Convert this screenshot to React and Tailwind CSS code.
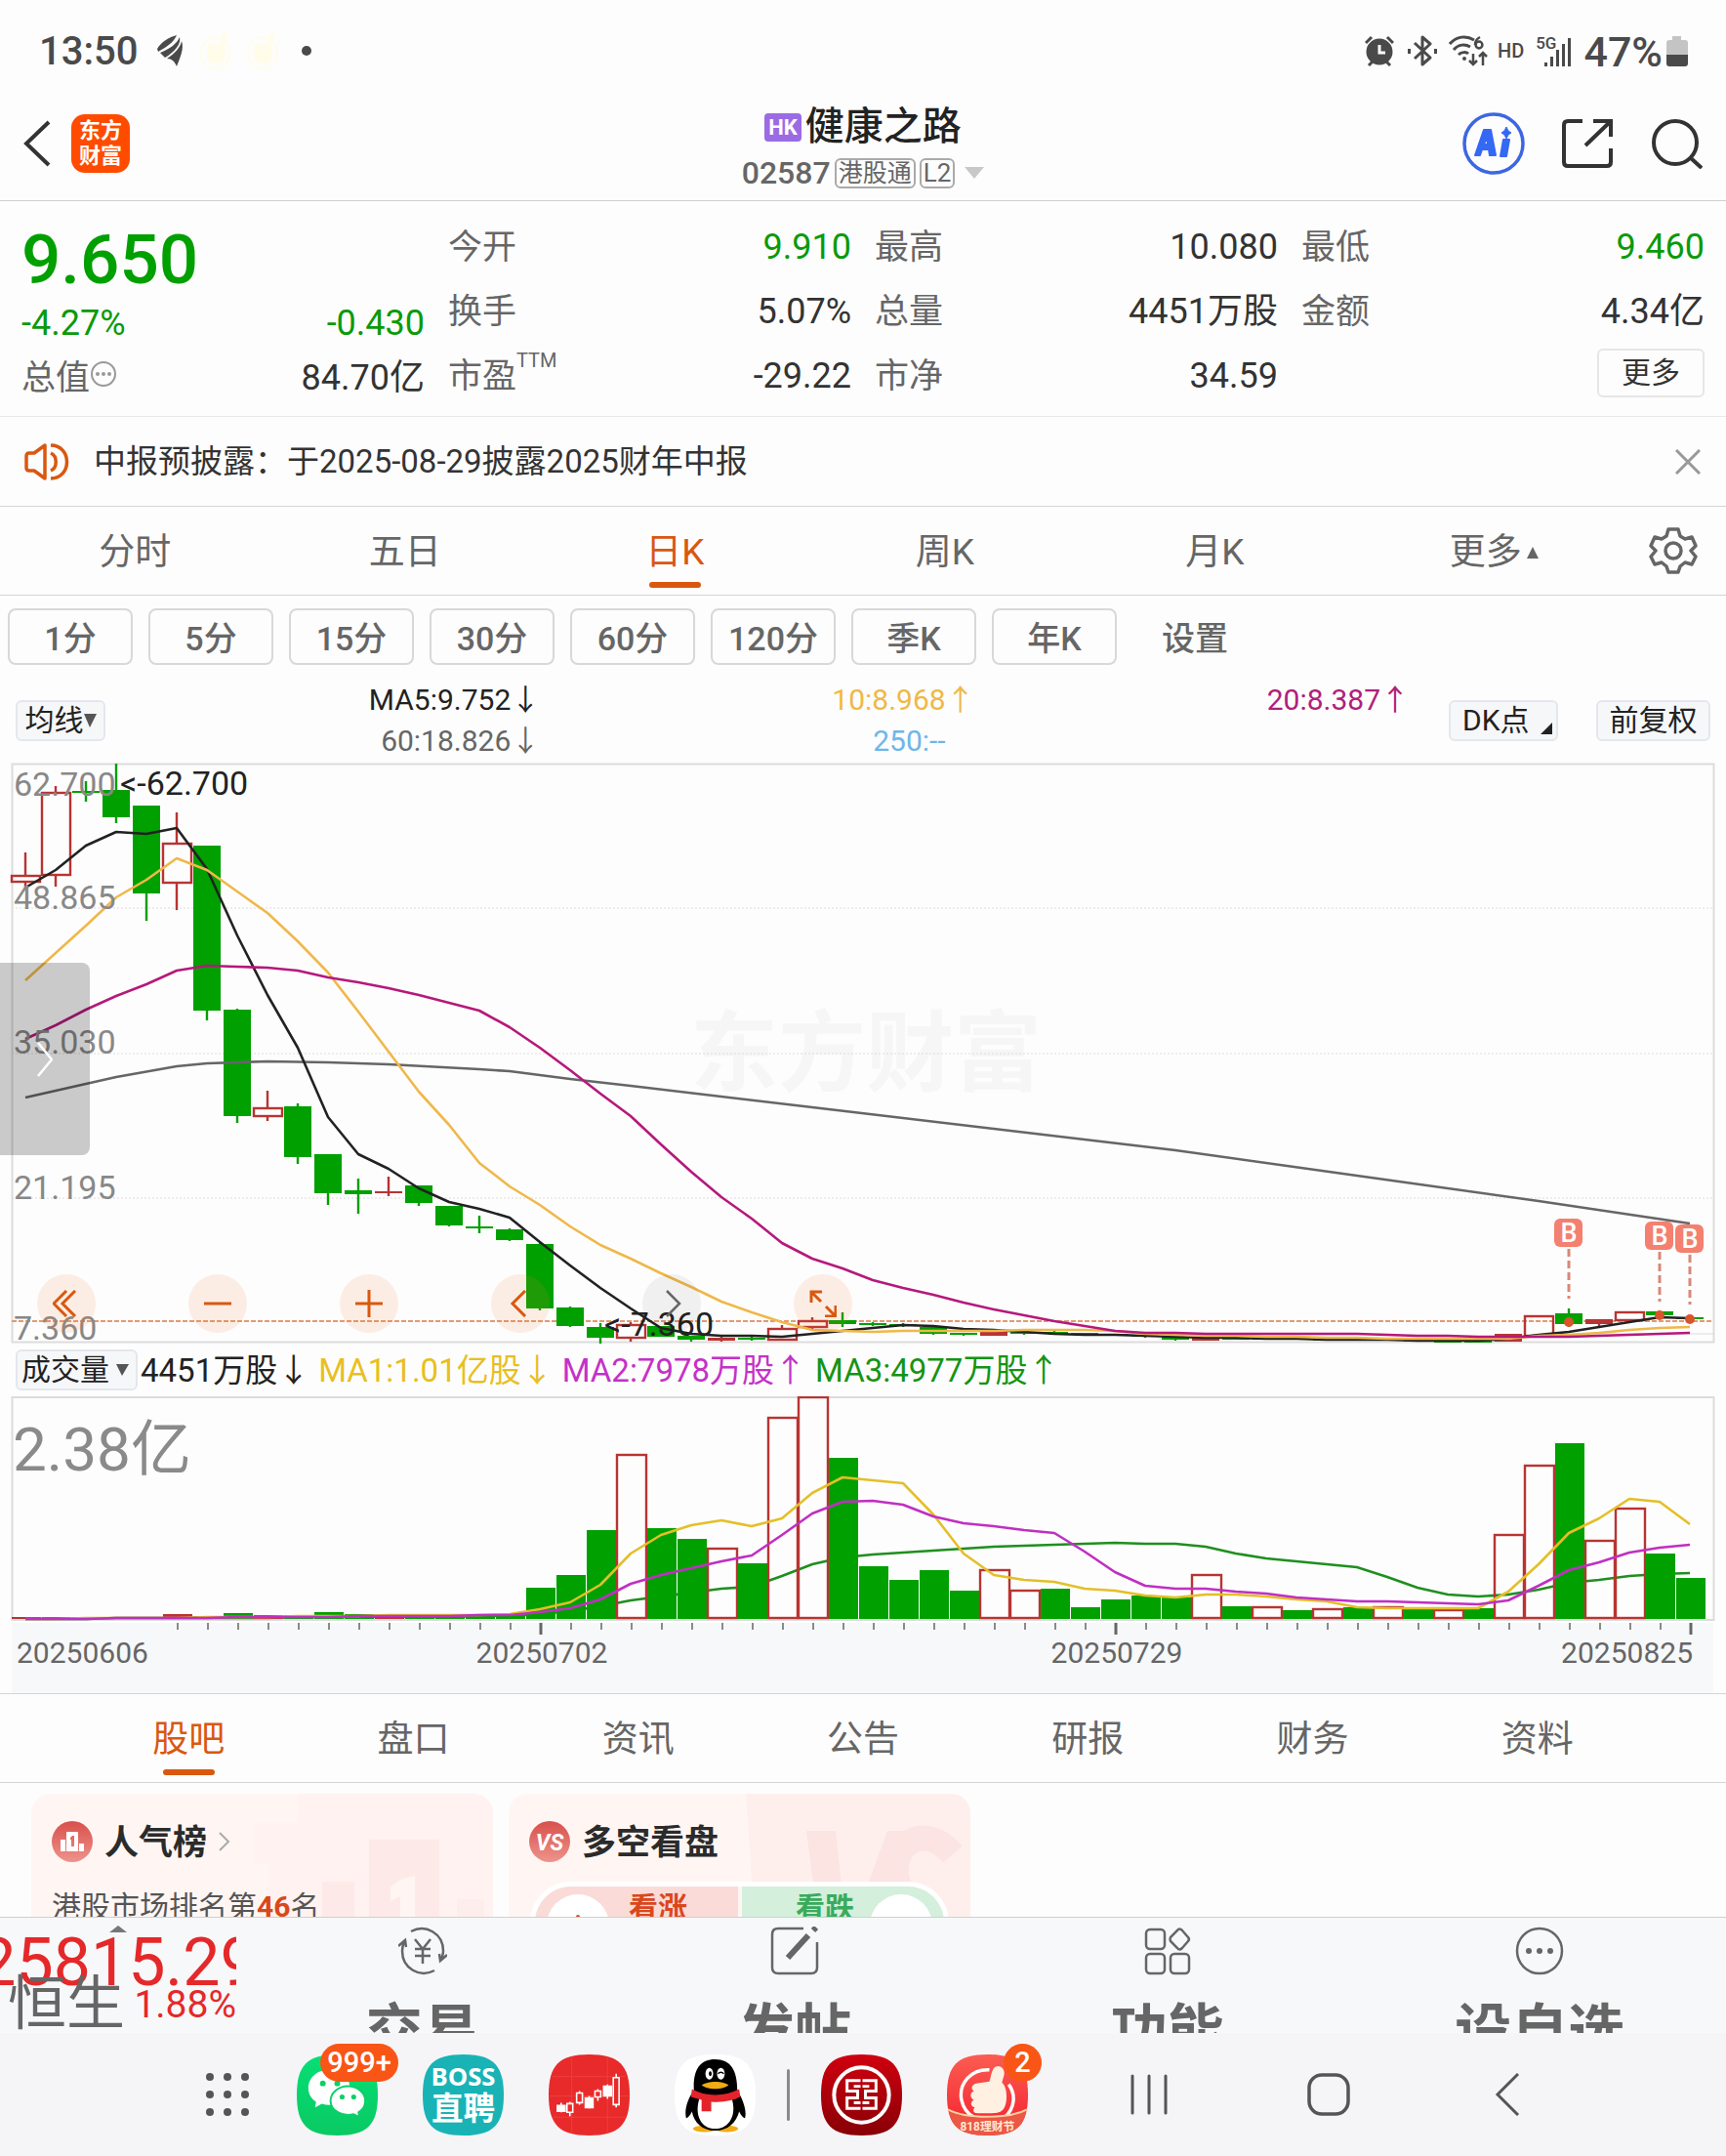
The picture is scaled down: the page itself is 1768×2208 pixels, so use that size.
import React from "react";

const GREEN = "#00a000";
const RED = "#b83432";
const X0 = 26;
const STEP = 31;
const cx = (i) => X0 + STEP * i;

/* [kind, bodyTop, bodyBottom, wickTop, wickBottom] */
const candles = [
  ["r", 897, 903, 873, 909], ["r", 812, 896, 805, 908], ["g", 810, 812, 800, 821],
  ["g", 809, 837, 782, 843], ["g", 825, 915, 825, 943], ["r", 864, 904, 832, 932],
  ["g", 866, 1035, 866, 1045], ["g", 1034, 1143, 1033, 1150], ["r", 1135, 1143, 1117, 1148],
  ["g", 1133, 1185, 1130, 1192], ["g", 1182, 1222, 1182, 1234], ["g", 1219, 1223, 1207, 1243],
  ["f", 1220, 1222, 1205, 1225], ["g", 1214, 1232, 1214, 1235], ["g", 1235, 1255, 1235, 1256],
  ["g", 1256, 1258, 1245, 1263], ["g", 1259, 1270, 1258, 1271], ["g", 1274, 1340, 1273, 1342],
  ["g", 1339, 1358, 1338, 1359], ["g", 1359, 1370, 1355, 1376], ["r", 1357, 1370, 1354, 1374],
  ["g", 1358, 1369, 1358, 1369], ["g", 1368, 1372, 1368, 1374], ["f", 1370, 1373, 1368, 1374],
  ["g", 1370, 1372, 1369, 1373], ["r", 1361, 1372, 1357, 1372], ["r", 1353, 1359, 1349, 1361],
  ["g", 1352, 1356, 1344, 1359], ["g", 1355, 1357, 1354, 1358], ["g", 1356, 1358, 1355, 1359],
  ["g", 1359, 1366, 1359, 1367], ["g", 1365, 1367, 1365, 1368], ["f", 1364, 1368, 1364, 1368],
  ["g", 1364, 1366, 1364, 1367], ["g", 1364, 1366, 1363, 1367], ["g", 1365, 1367, 1365, 1367],
  ["g", 1366, 1368, 1366, 1368], ["g", 1367, 1369, 1367, 1370], ["g", 1369, 1372, 1369, 1373],
  ["f", 1370, 1373, 1370, 1373], ["g", 1370, 1372, 1370, 1372], ["g", 1370, 1372, 1370, 1372],
  ["g", 1370, 1372, 1370, 1372], ["g", 1371, 1373, 1371, 1373], ["g", 1371, 1373, 1371, 1373],
  ["g", 1371, 1373, 1371, 1373], ["g", 1372, 1374, 1372, 1374], ["g", 1373, 1375, 1373, 1375],
  ["g", 1373, 1375, 1373, 1375], ["f", 1366, 1374, 1366, 1374], ["r", 1348, 1368, 1348, 1368],
  ["g", 1345, 1356, 1340, 1359], ["f", 1351, 1356, 1351, 1359], ["r", 1344, 1352, 1343, 1352],
  ["g", 1343, 1347, 1343, 1347], ["g", 1349, 1351, 1348, 1352],
];

const ma5 = [909, 891, 866, 852, 854, 848, 890, 958, 1019, 1073, 1144, 1182, 1197, 1217, 1231, 1238, 1247, 1272, 1296, 1319, 1340, 1360, 1366, 1368, 1368, 1369, 1366, 1363, 1360, 1357, 1358, 1361, 1362, 1364, 1366, 1367, 1367, 1368, 1369, 1370, 1370, 1371, 1371, 1372, 1372, 1372, 1373, 1373, 1373, 1371, 1367, 1364, 1359, 1354, 1349, 1350];
const ma10 = [1004, 976, 948, 919, 901, 879, 891, 913, 935, 964, 996, 1036, 1077, 1118, 1152, 1191, 1215, 1234, 1256, 1275, 1289, 1304, 1318, 1333, 1344, 1354, 1362, 1363, 1364, 1363, 1363, 1363, 1363, 1362, 1362, 1362, 1363, 1366, 1367, 1368, 1368, 1369, 1369, 1370, 1370, 1371, 1371, 1371, 1371, 1371, 1368, 1367, 1365, 1362, 1360, 1359];
const ma20 = [1064, 1050, 1034, 1020, 1008, 994, 989, 990, 991, 994, 1001, 1006, 1012, 1019, 1027, 1035, 1052, 1073, 1096, 1120, 1143, 1172, 1200, 1226, 1248, 1273, 1289, 1299, 1311, 1319, 1326, 1334, 1341, 1347, 1353, 1358, 1363, 1365, 1365, 1366, 1366, 1366, 1366, 1366, 1366, 1367, 1368, 1368, 1369, 1369, 1369, 1369, 1368, 1367, 1366, 1365];
const ma60 = [[0, 1124], [1, 1117], [3, 1103], [5, 1092], [6, 1089], [8, 1087], [10, 1088], [12, 1090], [15, 1095], [16, 1097], [18, 1105], [20, 1112], [26, 1134], [32, 1156], [38, 1178], [44, 1204], [50, 1230], [55, 1253]];

/* [kind, top] */
const volumes = [
  ["f", 1656], ["g", 1656], ["g", 1656], ["g", 1656], ["g", 1656], ["f", 1653], ["g", 1655], ["g", 1652],
  ["f", 1654], ["g", 1654], ["g", 1651], ["g", 1653], ["f", 1654], ["g", 1654], ["g", 1655], ["g", 1655], ["g", 1655],
  ["g", 1626], ["g", 1613], ["g", 1567], ["r", 1490], ["g", 1565], ["g", 1576], ["r", 1586], ["g", 1601],
  ["r", 1452], ["r", 1431], ["g", 1493], ["g", 1604], ["g", 1618], ["g", 1608], ["g", 1629], ["r", 1608],
  ["r", 1629], ["g", 1627], ["g", 1646], ["g", 1638], ["g", 1634], ["g", 1636], ["r", 1613], ["g", 1645],
  ["r", 1646], ["g", 1649], ["r", 1648], ["g", 1646], ["r", 1646], ["g", 1647], ["r", 1649], ["g", 1647],
  ["r", 1572], ["r", 1501], ["g", 1478], ["r", 1578], ["r", 1545], ["g", 1591], ["g", 1616],
];
const flat = (n, a, b) => Array.from({ length: n }, (_, i) => Math.round(a + ((b - a) * i) / n));
const vol5 = [...flat(17, 1658, 1653), 1648, 1641, 1623, 1591, 1572, 1562, 1557, 1563, 1555, 1529, 1513, 1516, 1519, 1551, 1591, 1613, 1618, 1620, 1627, 1629, 1634, 1636, 1633, 1633, 1635, 1638, 1640, 1646, 1647, 1647, 1647, 1647, 1630, 1602, 1570, 1555, 1535, 1538, 1561];
const vol10 = [...flat(17, 1658, 1654), 1651, 1647, 1638, 1622, 1613, 1606, 1599, 1593, 1572, 1550, 1538, 1537, 1541, 1553, 1560, 1563, 1567, 1570, 1589, 1610, 1624, 1627, 1627, 1630, 1632, 1636, 1638, 1640, 1640, 1641, 1642, 1643, 1639, 1624, 1608, 1600, 1590, 1585, 1582];
const vol20 = [...flat(17, 1658, 1655), 1653, 1650, 1645, 1639, 1635, 1631, 1627, 1625, 1614, 1602, 1595, 1592, 1590, 1588, 1586, 1584, 1583, 1582, 1581, 1580, 1581, 1581, 1584, 1591, 1596, 1599, 1602, 1605, 1615, 1626, 1633, 1635, 1633, 1628, 1621, 1618, 1614, 1612, 1611];

const line = (ys) => ys.map((y, i) => `${cx(i)},${y}`).join(" ");

const SQUIRCLE = "M42 0C73 0 84 11 84 42S73 84 42 84 0 73 0 42 11 0 42 0Z";

function StatusBar() {
  return (
    <div className="flex h-[104px] shrink-0 items-center justify-between pl-10 pr-[39px] font-medium text-[#4a4a4a]">
      <div className="flex items-center">
        <span className="pt-[2px] text-[40px] leading-none">13:50</span>
        <svg className="ml-5 h-8 w-7" viewBox="0 0 28 32" fill="#4a4a4a">
          <path d="M0 14C4 7 12 2 20 0 17 7 10 12 1 17Z" />
          <path d="M3 18C13 14 20 9 23 2 25 9 17 18 8 23Z" />
          <path d="M10 24C18 19 24 12 25 6 28 14 23 24 20 32 18 27 15 24 10 24Z" />
        </svg>
        {[0, 1].map((k) => (
          <svg key={k} className="ml-4 h-[38px] w-8" viewBox="0 0 32 38" fill="#fffdea">
            <ellipse cx="16" cy="21" rx="15" ry="16" fill="none" stroke="#fffdea" strokeWidth="2" />
            <rect x="7" y="11" width="19" height="21" rx="7" />
            <path d="M20 12L24 0 29 2 25 14Z" />
          </svg>
        ))}
        <span className="ml-6 size-[10px] rounded-full bg-[#4a4a4a]" />
      </div>
      <div className="flex items-center">
        <svg className="h-8 w-[30px]" viewBox="0 0 30 32" fill="none" stroke="#4a4a4a" strokeWidth="3">
          <circle cx="15" cy="17" r="12" fill="#4a4a4a" />
          <path d="M15 10V18H21" stroke="#fff" />
          <path d="M1 8L7 2M29 8L23 2M4 31L8 27M26 31L22 27" />
        </svg>
        <svg className="ml-[14px] h-8 w-[30px]" viewBox="0 0 30 32" fill="none" stroke="#4a4a4a" strokeWidth="3">
          <path d="M7 8L23 23 15 30V2L23 9 7 24" strokeLinejoin="round" />
          <path d="M1 14V19M29 14V19" strokeWidth="4" />
        </svg>
        <svg className="ml-3 h-8 w-10" viewBox="0 0 40 32" fill="none" stroke="#4a4a4a" strokeWidth="3">
          <path d="M1 9C8 1 18 0 26 5M5 15C10 9 17 9 22 12M10 20C13 17 18 17 20 19" />
          <circle cx="16" cy="24" r="2" fill="#4a4a4a" stroke="none" />
          <path d="M32 2C28 4 27 7 27 10" strokeWidth="2.5" />
          <circle cx="31" cy="10" r="3.4" strokeWidth="2.5" />
          <path d="M25 19V30M21 26L25 30 29 26M35 31V18M31 22L35 18 39 22" strokeWidth="2.5" />
        </svg>
        <span className="ml-[10px] text-[20px] leading-none">HD</span>
        <div className="ml-3 flex items-start">
          <span className="text-[17px] leading-none">5G</span>
          <svg className="-ml-3 h-8 w-7" viewBox="0 0 28 32" fill="#4a4a4a">
            <rect x="0" y="28" width="3" height="4" /><rect x="6" y="22" width="3" height="10" />
            <rect x="12" y="15" width="3" height="17" /><rect x="18" y="9" width="3" height="23" />
            <rect x="24" y="3" width="3" height="29" />
          </svg>
        </div>
        <span className="ml-3 pt-[2px] text-[43px] leading-none">47%</span>
        <svg className="ml-1 h-8 w-[22px]" viewBox="0 0 22 32">
          <path d="M6 1H15V5H19Q22 5 22 8V20H0V8Q0 5 3 5H6Z" fill="#c4c4c4" />
          <path d="M0 20H22V29Q22 32 19 32H3Q0 32 0 29Z" fill="#4a4a4a" />
        </svg>
      </div>
    </div>
  );
}

function Header() {
  return (
    <header className="grid h-[102px] shrink-0 grid-cols-3 items-center border-b border-[#d0d0d0] pb-2 pl-6 pr-6">
      <div className="flex items-center pb-2">
        <button aria-label="返回">
          <svg className="h-12 w-7" viewBox="0 0 28 48" fill="none" stroke="#333" strokeWidth="4">
            <path d="M26 2L3 24 26 46" />
          </svg>
        </button>
        <button className="ml-[21px] flex size-[60px] flex-col items-center justify-center rounded-[14px] bg-[#ff4b00] text-[22px] font-bold leading-[26px] text-white">
          <span>东方</span>
          <span>财富</span>
        </button>
      </div>
      <div className="flex flex-col items-center">
        <div className="flex items-center">
          <span className="mr-1 rounded-[4px] bg-[#9b6be3] px-1 text-[22px] font-bold leading-[29px] text-white">HK</span>
          <h1 className="text-[40px] font-medium leading-[52px] text-[#222]">健康之路</h1>
        </div>
        <div className="flex items-center text-[#666]">
          <span className="text-[32px] font-medium leading-[42px]">02587</span>
          <span className="ml-1 rounded-md border-2 border-[#aaa] px-[2px] text-[25px] leading-[27px]">港股通</span>
          <span className="ml-1 rounded-md border-2 border-[#aaa] px-[2px] text-[26px] leading-[27px]">L2</span>
          <svg className="ml-[10px] h-3 w-5" viewBox="0 0 20 12" fill="#c8c8c8"><path d="M0 0H20L10 12Z" /></svg>
        </div>
      </div>
      <div className="flex items-center justify-end pb-2">
        <button aria-label="AI">
          <svg className="size-16" viewBox="0 0 64 64" fill="none">
            <circle cx="32" cy="32" r="30" stroke="#3c66e4" strokeWidth="3.5" />
            <g fill="#3568f5" stroke="#3568f5" strokeWidth="2" strokeLinejoin="round">
              <path fillRule="evenodd" d="M13 44L22 18H29L34 44H28L27 38H20L18 44ZM22 33H26L25 25Z" />
              <path d="M42 28H48L45 45H39Z" />
              <path d="M45 15L47 19 50 21 47 23 45 27 43 23 40 21 43 19Z" strokeWidth="1" />
            </g>
          </svg>
        </button>
        <button aria-label="分享" className="ml-[38px]">
          <svg className="size-[52px]" viewBox="0 0 52 52" fill="none" stroke="#333" strokeWidth="4">
            <path d="M21 3H6Q2 3 2 7V45Q2 49 6 49H46Q50 49 50 45V31M32 3H50V19M49 4L24 28" />
          </svg>
        </button>
        <button aria-label="搜索" className="ml-10">
          <svg className="size-[52px]" viewBox="0 0 52 52" fill="none" stroke="#333" strokeWidth="4">
            <circle cx="24" cy="25" r="22" />
            <path d="M40 41L51 51" />
          </svg>
        </button>
      </div>
    </header>
  );
}

function Stat({ label, sup, value, color }) {
  return (
    <div className="flex h-[66px] items-center justify-between">
      <dt className="flex items-center text-[35px] leading-none text-[#666]">
        {label}
        {sup && <span className="mb-8 text-[20px]">{sup}</span>}
      </dt>
      <dd className={color || "text-[#333]"}>{value}</dd>
    </div>
  );
}

function Quote() {
  return (
    <section className="grid h-[221px] shrink-0 grid-cols-4 gap-6 border-b border-[#e8e8e8] px-[22px] pt-[14px] text-[36px] leading-none text-[#333]">
      <div className="text-[#0a9a0a]">
        <div className="flex h-[86px] items-center pt-1 text-[71px] font-medium text-[#00a000]">9.650</div>
        <div className="flex h-[50px] items-center justify-between"><span>-4.27%</span><span>-0.430</span></div>
        <div className="flex h-[62px] items-center justify-between text-[#333]">
          <span className="flex items-center text-[35px] text-[#666]">
            总值
            <svg className="mb-2 h-7 w-7" viewBox="0 0 28 28" fill="#999">
              <circle cx="14" cy="14" r="12" fill="none" stroke="#999" strokeWidth="2" />
              <circle cx="8" cy="14" r="2" /><circle cx="14" cy="14" r="2" /><circle cx="20" cy="14" r="2" />
            </svg>
          </span>
          <span>84.70亿</span>
        </div>
      </div>
      <dl>
        <Stat label="今开" value="9.910" color="text-[#0a9a0a]" />
        <Stat label="换手" value="5.07%" />
        <Stat label="市盈" sup="TTM" value="-29.22" />
      </dl>
      <dl>
        <Stat label="最高" value="10.080" />
        <Stat label="总量" value="4451万股" />
        <Stat label="市净" value="34.59" />
      </dl>
      <div>
        <dl>
          <Stat label="最低" value="9.460" color="text-[#0a9a0a]" />
          <Stat label="金额" value="4.34亿" />
        </dl>
        <div className="flex h-[60px] items-center justify-end">
          <button className="h-[50px] w-[110px] rounded-md border-2 border-[#e6e6e6] text-[30px]">更多</button>
        </div>
      </div>
    </section>
  );
}

function Notice() {
  return (
    <section className="flex h-[92px] shrink-0 items-center border-b border-[#d5d5d5] pl-6 pr-[26px]">
      <svg className="h-10 w-12" viewBox="0 0 48 40" fill="none" stroke="#d9580f" strokeWidth="3.5" strokeLinejoin="round">
        <path d="M22 3V37L11 29H6Q3 29 3 26V14Q3 11 6 11H11Z" />
        <path d="M28 11C35 14 35 26 28 29M28 3C50 3 50 37 28 37" />
      </svg>
      <p className="ml-6 flex-1 text-[33px] leading-none text-[#333]">中报预披露：于2025-08-29披露2025财年中报</p>
      <button aria-label="关闭">
        <svg className="size-[26px]" viewBox="0 0 26 26" stroke="#999" strokeWidth="3"><path d="M1 1L25 25M25 1L1 25" /></svg>
      </button>
    </section>
  );
}

function TabButton({ active, children }) {
  return (
    <button className={`flex h-full flex-1 flex-col items-center justify-end text-[37px] leading-[52px] ${active ? "text-[#d9580f]" : "text-[#666]"}`}>
      <span className="flex items-center">{children}</span>
      <span className={`mb-[7px] mt-1 h-[6px] w-[53px] rounded-full ${active ? "bg-[#d9580f]" : ""}`} />
    </button>
  );
}

function PeriodTabs() {
  return (
    <nav className="flex h-[91px] shrink-0 items-center border-b border-[#d5d5d5]">
      <TabButton>分时</TabButton>
      <TabButton>五日</TabButton>
      <TabButton active>日K</TabButton>
      <TabButton>周K</TabButton>
      <TabButton>月K</TabButton>
      <TabButton>
        <span className="pl-5">更多</span>
        <svg className="ml-1 h-[14px] w-[14px]" viewBox="0 0 14 14" fill="#666"><path d="M7 1L13 13H1Z" /></svg>
      </TabButton>
      <button aria-label="图表设置" className="flex w-[109px] justify-center">
        <svg className="size-[50px]" viewBox="0 0 50 50" fill="none" stroke="#666" strokeWidth="3.5" strokeLinejoin="round">
          <path d="M20 3H30L32 10 37 13 44 11 48 20 43 25 48 31 44 39 37 37 32 41 30 47H20L18 41 13 37 6 39 2 31 7 25 2 20 6 11 13 13 18 10Z" />
          <circle cx="25" cy="25" r="8" />
        </svg>
      </button>
    </nav>
  );
}

function IntervalRow() {
  return (
    <div className="mt-[13px] flex shrink-0 gap-4 px-2">
      {["1分", "5分", "15分", "30分", "60分", "120分", "季K", "年K"].map((t) => (
        <button key={t} className="h-[58px] w-32 rounded-lg border-2 border-[#d8d8d8] pt-1 text-[34px] font-medium leading-none text-[#666]">{t}</button>
      ))}
      <button className="h-[58px] w-32 pt-1 text-[34px] font-medium leading-none text-[#666]">设置</button>
    </div>
  );
}

const chip = "h-[42px] shrink-0 rounded-md border-2 border-[#e4e7ec] bg-[#f6f7f9] text-[30px] leading-none text-[#222]";

function AverageRow() {
  return (
    <div className="mt-[15px] flex h-[84px] shrink-0 items-center px-4 text-[30px] leading-[42px]">
      <button className={`${chip} flex w-[92px] items-center justify-center`}>
        均线
        <svg className="h-[14px] w-[13px]" viewBox="0 0 13 14" fill="#555"><path d="M0 0H13L6 14Z" /></svg>
      </button>
      <div className="grid flex-1 grid-cols-3 text-right">
        <span className="text-[#222]">MA5:9.752↓</span>
        <span className="text-[#efb945]">10:8.968↑</span>
        <span className="text-[#b0207a]">20:8.387↑</span>
        <span className="text-[#666]">60:18.826↓</span>
        <span className="pr-[30px] text-[#6fb6e8]">250:--</span>
      </div>
      <button className={`${chip} ml-10 flex w-[112px] items-center justify-between pl-3 pr-1`}>
        DK点
        <svg className="mt-4 h-3 w-3" viewBox="0 0 12 12" fill="#222"><path d="M12 0V12H0Z" /></svg>
      </button>
      <button className={`${chip} ml-[39px] w-[117px]`}>前复权</button>
    </div>
  );
}

function Marker({ x, y }) {
  return (
    <g>
      <rect x={x - 15} y={y} width="29" height="29" rx="6" fill="#f4806f" />
      <text x={x} y={y + 24} textAnchor="middle" fontSize="27" fontWeight="500" fill="#fff">B</text>
      <line x1={x} y1={y + 31} x2={x} y2={y + 82} stroke="#d98877" strokeWidth="3" strokeDasharray="8 4" />
    </g>
  );
}

const toolBase = "flex size-[60px] items-center justify-center rounded-full";

function PriceChart() {
  return (
    <div className="relative shrink-0">
      <svg className="block h-auto w-full" viewBox="0 780 1768 596" fill="none">
        <text x="887" y="1110" textAnchor="middle" fontSize="90" fontWeight="700" fill="#f6f6f6">东方财富</text>
        <rect x="12.5" y="782.5" width="1743" height="592" stroke="#dcdcdc" strokeWidth="2" />
        {[930, 1079, 1227].map((y) => (
          <line key={y} x1="12" x2="1755" y1={y} y2={y} stroke="#dcdcdc" strokeDasharray="2 2" />
        ))}
        <line x1="1590" x2="1755" y1="1366" y2="1366" stroke="#dcdcdc" />
        <line x1="12" x2="1755" y1="1353" y2="1353" stroke="#e29a72" strokeWidth="2" strokeDasharray="5 2" />
        {candles.map(([k, t, b, wt, wb], i) => (
          <g key={i} fill={k === "r" ? "none" : k === "g" ? GREEN : RED} stroke={k === "g" ? GREEN : RED} strokeWidth="2.4">
            {k === "r" ? (
              <path d={`M${cx(i)} ${wt}V${t}M${cx(i)} ${b}V${wb}`} />
            ) : (
              <path d={`M${cx(i)} ${wt}V${wb}`} />
            )}
            {k === "r" ? (
              <rect x={cx(i) - 14} y={t} width="29" height={b - t} />
            ) : (
              <rect x={cx(i) - 14} y={t} width="28" height={b - t} stroke="none" />
            )}
          </g>
        ))}
        <g strokeWidth="2.6" strokeLinejoin="round">
          <polyline points={ma60.map(([i, y]) => `${cx(i)},${y}`).join(" ")} stroke="#666" />
          <polyline points={line(ma5)} stroke="#222" />
          <polyline points={line(ma10)} stroke="#efb84a" />
          <polyline points={line(ma20)} stroke="#b5197b" />
        </g>
        <Marker x={1607} y={1248} />
        <Marker x={1700} y={1251} />
        <Marker x={1731} y={1254} />
        <g fill="#d9552b">
          <circle cx="1607" cy="1354" r="5" /><circle cx="1700" cy="1347" r="5" /><circle cx="1731" cy="1351" r="5" />
        </g>
        <g fontSize="34" fill="#888">
          <text x="14" y="815">62.700</text>
          <text x="14" y="931">48.865</text>
          <text x="14" y="1079">35.030</text>
          <text x="14" y="1228">21.195</text>
          <text x="14" y="1372">7.360</text>
        </g>
        <g fontSize="34" fill="#222">
          <text x="123" y="814">&lt;-62.700</text>
          <text x="619" y="1368">&lt;-7.360</text>
        </g>
      </svg>
      <button aria-label="展开侧栏" className="absolute left-0 top-[206px] flex h-[197px] w-[92px] items-center rounded-r-lg bg-black/20 pl-[38px]">
        <svg className="h-9 w-4" viewBox="0 0 16 36" fill="none" stroke="#fff" strokeWidth="2.5"><path d="M1 1L15 18 1 35" /></svg>
      </button>
      <div className="absolute bottom-[11px] left-[38px] flex gap-[95px]">
        <button aria-label="最早" className={`${toolBase} bg-[#fa7832]/12`}>
          <svg className="size-7" viewBox="0 0 28 28" fill="none" stroke="#d9580f" strokeWidth="3"><path d="M14 1L1 14 14 27M23 1L10 14 23 27" /></svg>
        </button>
        <button aria-label="缩小" className={`${toolBase} bg-[#fa7832]/12`}>
          <svg className="size-7" viewBox="0 0 28 28" stroke="#d9580f" strokeWidth="3"><path d="M0 14H28" /></svg>
        </button>
        <button aria-label="放大" className={`${toolBase} bg-[#fa7832]/12`}>
          <svg className="size-7" viewBox="0 0 28 28" stroke="#d9580f" strokeWidth="3"><path d="M0 14H28M14 0V28" /></svg>
        </button>
        <button aria-label="向前" className={`${toolBase} bg-[#fa7832]/12`}>
          <svg className="size-7" viewBox="0 0 28 28" fill="none" stroke="#d9580f" strokeWidth="3"><path d="M19 1L6 14 19 27" /></svg>
        </button>
        <button aria-label="向后" className={`${toolBase} bg-black/5`}>
          <svg className="size-7" viewBox="0 0 28 28" fill="none" stroke="#666" strokeWidth="2.5"><path d="M9 1L22 14 9 27" /></svg>
        </button>
        <button aria-label="全屏" className={`${toolBase} bg-[#fa7832]/12`}>
          <svg className="size-7" viewBox="0 0 28 28" fill="none" stroke="#d9580f" strokeWidth="3"><path d="M2 13V2H13M2 2L12 12M27 16V27H16M27 27L17 17" /></svg>
        </button>
      </div>
    </div>
  );
}

function VolumeRow() {
  return (
    <div className="flex h-[54px] shrink-0 items-center gap-[9px] pl-4 text-[33px] leading-none">
      <button className={`${chip} -mr-[6px] flex w-[125px] items-center justify-between pl-1 pr-[7px]`}>
        成交量
        <svg className="h-3 w-[13px]" viewBox="0 0 13 12" fill="#555"><path d="M0 0H13L6 12Z" /></svg>
      </button>
      <span className="text-[#222]">4451万股↓</span>
      <span className="text-[#e8bf20]">MA1:1.01亿股↓</span>
      <span className="text-[#c431c8]">MA2:7978万股↑</span>
      <span className="text-[#149414]">MA3:4977万股↑</span>
    </div>
  );
}

function VolumeChart() {
  return (
    <svg className="block h-auto w-full shrink-0" viewBox="0 1430 1768 304" fill="none">
      <rect x="12" y="1662" width="1743" height="72" fill="#f7f8fa" />
      <rect x="12.5" y="1431" width="1743" height="228" stroke="#dcdcdc" strokeWidth="2" />
      <text x="13" y="1506" fontSize="62" fill="#8a8a8a">2.38亿</text>
      <polyline points={line(vol20)} stroke="#1f8f1f" strokeWidth="2.6" />
      {volumes.map(([k, t], i) =>
        k === "r" ? (
          <rect key={i} x={cx(i) - 14} y={t} width="30" height={1657 - t} stroke={RED} strokeWidth="2.4" />
        ) : (
          <rect key={i} x={cx(i) - 14} y={t} width="30" height={1658 - t} fill={k === "g" ? GREEN : RED} />
        )
      )}
      <g strokeWidth="2.6" strokeLinejoin="round">
        <polyline points={line(vol5)} stroke="#e4bf28" />
        <polyline points={line(vol10)} stroke="#c02fc2" />
      </g>
      {volumes.map((_, i) =>
        i < 5 ? null : (
          <line key={i} x1={cx(i) + 1} x2={cx(i) + 1} y1="1662" y2={[17, 36, 55].includes(i) ? 1674 : 1669} stroke="#666" strokeWidth={[17, 36, 55].includes(i) ? 3 : 1.5} />
        )
      )}
      <g fontSize="30" fill="#666">
        <text x="17" y="1703">20250606</text>
        <text x="555" y="1703" textAnchor="middle">20250702</text>
        <text x="1144" y="1703" textAnchor="middle">20250729</text>
        <text x="1734" y="1703" textAnchor="end">20250825</text>
      </g>
    </svg>
  );
}

function InfoTabs() {
  return (
    <nav className="flex h-[92px] shrink-0 border-y border-[#d5d5d5] px-[78px]">
      {["股吧", "盘口", "资讯", "公告", "研报", "财务", "资料"].map((t, i) => (
        <TabButton key={t} active={i === 0}>{t}</TabButton>
      ))}
    </nav>
  );
}

function Feed() {
  return (
    <section className="flex min-h-0 flex-1 gap-4 overflow-hidden px-8 pt-[11px]">
      <article className="relative h-[220px] w-[473px] overflow-hidden rounded-[20px] bg-[#fff6f4] px-[21px] pt-[26px]">
        <svg className="absolute right-0 top-0 h-[220px] w-[245px]" viewBox="0 0 245 220" fill="#fdeeec">
          <path d="M45 0H245V220H15V72H0V30H45Z" fill="#fff2f0" />
          <path d="M70 90H103V220H70ZM118 47H190V220H118Z" fill="#fdeae8" />
          <path d="M150 88L165 84V220H150V105L140 110V96Z" fill="#fff5f3" />
          <path d="M208 108H236V220H208Z" />
        </svg>
        <div className="relative flex items-center">
          <svg className="size-[42px]" viewBox="0 0 42 42">
            <defs><linearGradient id="rank" x1="0" y1="0" x2="0" y2="1"><stop stopColor="#d8504c" /><stop offset="1" stopColor="#ee938c" /></linearGradient></defs>
            <circle cx="21" cy="21" r="21" fill="url(#rank)" />
            <path fill="#fff" fillRule="evenodd" d="M9 19H14V31H9ZM15 11H27V31H15ZM19 17V19H20V26H23V15H21ZM28 23H33V31H28Z" />
          </svg>
          <h2 className="ml-3 pt-1 text-[35px] font-bold leading-[42px] text-[#2b2b2b]">人气榜</h2>
          <svg className="ml-3 h-5 w-3" viewBox="0 0 12 20" fill="none" stroke="#aaa" strokeWidth="2"><path d="M1 1L10 10 1 19" /></svg>
        </div>
        <p className="relative mt-[22px] text-[30px] leading-[44px] text-[#555]">港股市场排名第<b className="text-[#d9481c]">46</b>名</p>
      </article>
      <article className="relative h-[220px] w-[473px] overflow-hidden rounded-[20px] bg-[#fff6f4] px-[21px] pt-[26px]">
        <svg className="absolute right-0 top-0 h-[220px] w-[230px]" viewBox="0 0 230 220" fill="none">
          <path d="M0 0H230V220H15Z" fill="#feefed" />
          <path d="M62 38H92L104 150 145 38H172L125 220H86Z" fill="#fbe4e2" />
          <path d="M212 62C182 28 150 52 154 84 158 116 196 116 192 150 188 176 164 170 142 146" stroke="#fbe4e2" strokeWidth="26" />
        </svg>
        <div className="relative flex items-center">
          <svg className="size-[42px]" viewBox="0 0 42 42">
            <circle cx="21" cy="21" r="21" fill="url(#rank)" />
            <text x="21" y="30" textAnchor="middle" fontSize="23" fontWeight="700" fontStyle="italic" fill="#fff">VS</text>
          </svg>
          <h2 className="ml-3 pt-1 text-[35px] font-bold leading-[42px] text-[#2b2b2b]">多空看盘</h2>
        </div>
        <div className="relative mx-[1px] mt-[18px] flex h-[84px] gap-1 overflow-hidden rounded-full border-[5px] border-white text-[30px] font-bold leading-[44px]">
          <div className="flex flex-1 bg-[#fadbd8] pl-3 text-[#d9481c]">
            <span className="mt-2 flex size-16 justify-center rounded-full bg-white pt-[21px]"><span className="size-1 rounded-full bg-[#d9481c]" /></span>
            <span className="ml-5">看涨</span>
          </div>
          <div className="flex flex-1 justify-end bg-[#d4efdc] pr-3 text-[#3aab5c]">
            <span className="mr-4">看跌</span>
            <span className="mt-2 size-16 rounded-full bg-white" />
          </div>
        </div>
      </article>
    </section>
  );
}

function ActionItem({ label, children }) {
  return (
    <button className="flex h-full flex-1 flex-col items-center overflow-hidden pt-[9px] text-[58px] font-bold leading-[84px] text-[#666]">
      <svg className="size-[50px] shrink-0" viewBox="0 0 50 50" fill="none" stroke="#666" strokeWidth="2.5">{children}</svg>
      <span className="mt-[15px]">{label}</span>
    </button>
  );
}

function ActionBar() {
  return (
    <div className="flex h-[119px] shrink-0 overflow-hidden border-t border-[#cfcfcf] bg-[#f7f8fa]">
      <button className="flex h-full w-[242px] shrink-0 flex-col items-center overflow-hidden leading-none text-[#e5282a]">
        <svg className="mt-2 h-[7px] w-[18px] shrink-0" viewBox="0 0 18 7" fill="#777"><path d="M9 0L18 7H0Z" /></svg>
        <span className="text-[68px] leading-[62px]">25815.29</span>
        <span className="-mt-5 flex w-full items-center justify-between pl-2">
          <span className="text-[60px] leading-[64px] text-[#666]">恒生</span>
          <span className="text-[39px] leading-[64px]">1.88%</span>
        </span>
      </button>
      <ActionItem label="交易">
        <path d="M13 5C28 -3 46 7 46 25 46 28 45 31 44 34M50 29L43 35 42 28M37 45C22 53 4 43 4 25 4 22 5 18 6 16M0 20L7 14 8 21" />
        <path d="M17 13L25 23 33 13M25 23V38M17 23H33M17 30H33" />
      </ActionItem>
      <ActionItem label="发帖">
        <path d="M34 2H8Q2 2 2 8V42Q2 48 8 48H42Q48 48 48 42V16" />
        <path d="M18 32L39 9M44 4L47 1" strokeWidth="6" />
      </ActionItem>
      <ActionItem label="功能">
        <rect x="3" y="3" width="19" height="20" rx="4" /><rect x="3" y="28" width="19" height="20" rx="4" />
        <rect x="28" y="28" width="19" height="20" rx="4" />
        <path d="M35 4Q37 1 40 4L46 11Q48 13 46 15L40 22Q37 25 35 22L28 15Q27 13 28 11Z" />
      </ActionItem>
      <ActionItem label="设自选">
        <circle cx="25" cy="25" r="23" />
        <g fill="#666" stroke="none"><circle cx="14" cy="25" r="3" /><circle cx="25" cy="25" r="3" /><circle cx="36" cy="25" r="3" /></g>
      </ActionItem>
    </div>
  );
}

function Badge({ children }) {
  return (
    <span className="absolute -top-[11px] left-6 flex w-20 justify-center rounded-full bg-[#f95516] text-[29px] font-medium leading-[39px] text-white">{children}</span>
  );
}

function DockApp({ label, badge, count, children }) {
  return (
    <button aria-label={label} className="relative size-[83px] shrink-0">
      <svg className="size-full" viewBox="0 0 84 84" fill="none">{children}</svg>
      {badge && <Badge>{badge}</Badge>}
      {count && (
        <span className="absolute -right-[14px] -top-[11px] w-[39px] rounded-full bg-[#f95516] text-[29px] font-medium leading-[39px] text-white">{count}</span>
      )}
    </button>
  );
}

function Dock() {
  return (
    <nav className="flex h-[126px] shrink-0 items-center bg-[#f5f5f8] pl-[211px]">
      <button aria-label="所有应用">
        <svg className="size-[44px]" viewBox="0 0 44 44" fill="#555">
          {[4, 22, 40].map((y) => [4, 22, 40].map((x) => <circle key={`${x}-${y}`} cx={x} cy={y} r="4" />))}
        </svg>
      </button>
      <div className="ml-[49px] flex items-center gap-[46px]">
        <DockApp label="微信" badge="999+">
          <defs><linearGradient id="wx" x1="0" y1="0" x2="0" y2="1"><stop stopColor="#05df75" /><stop offset="1" stopColor="#0ac963" /></linearGradient></defs>
          <path d={SQUIRCLE} fill="url(#wx)" />
          <path d="M34 16C20 16 12 25 12 35 12 41 15 46 20 49L19 55 26 51C40 56 55 46 55 34 55 24 46 16 34 16Z" fill="#fff" />
          <g fill="#0fcf68"><circle cx="27" cy="30" r="3" /><circle cx="42" cy="30" r="3" /></g>
          <path d="M53 33C43 33 35 40 35 48 35 58 47 65 59 62L65 65 64 60C69 57 71 53 71 48 71 40 63 33 53 33Z" fill="#fff" stroke="#0bd069" strokeWidth="2" />
          <g fill="#0fcf68"><circle cx="47" cy="44" r="2.6" /><circle cx="59" cy="44" r="2.6" /></g>
        </DockApp>
        <DockApp label="BOSS直聘">
          <path d={SQUIRCLE} fill="#19b3b5" />
          <text x="42" y="32" textAnchor="middle" fontSize="26" fontWeight="700" fill="#fff" fontFamily="Open Sans">BOSS</text>
          <text x="42" y="68" textAnchor="middle" fontSize="33" fontWeight="700" fill="#fff">直聘</text>
        </DockApp>
        <DockApp label="行情">
          <path d={SQUIRCLE} fill="#e82a2a" />
          <path d="M4 23H80M1 43H83M4 65H80M24 3V81M61 2V82" stroke="#ec403f" strokeWidth="1" />
          <g stroke="#fff" strokeWidth="1.6">
            <path d="M13 50V60M22 49V64M32 38V52M42 43V56M51 36V48M61 31V46M70 20V55" />
            <path d="M9 53H17V59H9ZM38 45H46V55H38ZM57 33H65V43H57Z" fill="#fff" />
            <path d="M19 51H25V60H19ZM29 40H35V50H29ZM48 38H54V44H48ZM67 24H73V52H67Z" fill="#e82a2a" />
          </g>
        </DockApp>
        <DockApp label="QQ">
          <path d={SQUIRCLE} fill="#fff" />
          <ellipse cx="31" cy="77" rx="12" ry="3.5" fill="#f2ab14" /><ellipse cx="54" cy="77" rx="12" ry="3.5" fill="#f2ab14" />
          <path d="M42 5C26 5 19 16 20 37 13 47 10 58 12 66 14 66 17 62 18 59 20 71 29 79 42 79S64 71 67 59C68 62 71 66 73 66 75 58 71 47 65 37 65 16 58 5 42 5Z" fill="#000" />
          <path d="M26 45H59C65 62 57 77 42 77S20 62 26 45Z" fill="#fff" />
          <path d="M18 36C32 44 52 44 67 36L68 44C60 48 50 50 38 49V59H28V47L17 44Z" fill="#e5232b" />
          <ellipse cx="36" cy="20" rx="4" ry="6" fill="#fff" /><ellipse cx="48" cy="20" rx="4" ry="6" fill="#fff" />
          <ellipse cx="37" cy="20" rx="1.5" ry="2.5" fill="#000" /><path d="M45 20Q48 17 51 20" stroke="#000" strokeWidth="1.5" />
          <path d="M28 32C34 27 51 27 56 32 50 37 34 37 28 32Z" fill="#f2ab14" />
        </DockApp>
      </div>
      <span className="ml-8 h-[53px] w-[3px] rounded-full bg-[#8a8a8a]" />
      <div className="ml-8 flex items-center gap-[46px]">
        <DockApp label="工商银行">
          <defs><linearGradient id="bank" x1="0" y1="0" x2="0" y2="1"><stop stopColor="#d0000f" /><stop offset="1" stopColor="#880006" /></linearGradient></defs>
          <path d={SQUIRCLE} fill="url(#bank)" />
          <circle cx="42" cy="42" r="28.5" stroke="#fff" strokeWidth="4" />
          <path d="M41 27H27V38H38V45H27V56H41M34 33H41M34 50H41M43 27H57V38H46V45H57V56H43M43 33H50M43 50H50" stroke="#fff" strokeWidth="3" />
        </DockApp>
        <DockApp label="理财" count="2">
          <defs><linearGradient id="fund" x1="0" y1="0" x2="0" y2="1"><stop stopColor="#fb5d52" /><stop offset="1" stopColor="#f5202e" /></linearGradient></defs>
          <path d={SQUIRCLE} fill="url(#fund)" />
          <path d="M44 16C25 15 12 30 15 47 17 56 22 62 28 65M64 31C72 42 70 56 60 65" stroke="#fff" strokeWidth="3.5" />
          <path d="M30 30L44 28C46 22 46 16 50 13 55 10 61 15 59 22L57 29C63 34 63 50 59 56 56 61 50 61 44 61H32C26 61 27 56 29 55 24 54 24 49 28 47 23 45 24 39 28 38 24 35 26 31 30 30Z" fill="#fff0e2" />
          <path d="M2 58C20 67 64 67 82 58 80 76 68 84 42 84S4 76 2 58Z" fill="#ec5746" />
          <path d="M1 57C20 67 64 67 83 57" stroke="#ffd2a0" strokeWidth="2" />
          <text x="42" y="79" textAnchor="middle" fontSize="12" fontWeight="700" fill="#ffe9d0">818理财节</text>
        </DockApp>
      </div>
      <div className="ml-[104px] flex items-center">
        <button aria-label="最近任务">
          <svg className="h-[42px] w-[40px]" viewBox="0 0 40 42" stroke="#555" strokeWidth="3" strokeLinecap="round"><path d="M3 2V40M20 2V40M37 2V40" /></svg>
        </button>
        <button aria-label="主屏幕" className="ml-[142px]">
          <svg className="size-[44px]" viewBox="0 0 44 44" fill="none" stroke="#555" strokeWidth="3.5"><rect x="2" y="2" width="40" height="40" rx="13" /></svg>
        </button>
        <button aria-label="后退" className="ml-[148px]">
          <svg className="h-[44px] w-[26px]" viewBox="0 0 26 44" fill="none" stroke="#555" strokeWidth="3"><path d="M24 1L3 22 24 43" /></svg>
        </button>
      </div>
    </nav>
  );
}

export default function App() {
  return (
    <div lang="zh-CN" className="flex h-screen w-full flex-col overflow-hidden bg-[#fdfdfd] [font-family:Roboto,'Noto_Sans_CJK_SC',sans-serif]">
      <StatusBar />
      <Header />
      <Quote />
      <Notice />
      <PeriodTabs />
      <IntervalRow />
      <AverageRow />
      <PriceChart />
      <VolumeRow />
      <VolumeChart />
      <InfoTabs />
      <Feed />
      <ActionBar />
      <Dock />
    </div>
  );
}
